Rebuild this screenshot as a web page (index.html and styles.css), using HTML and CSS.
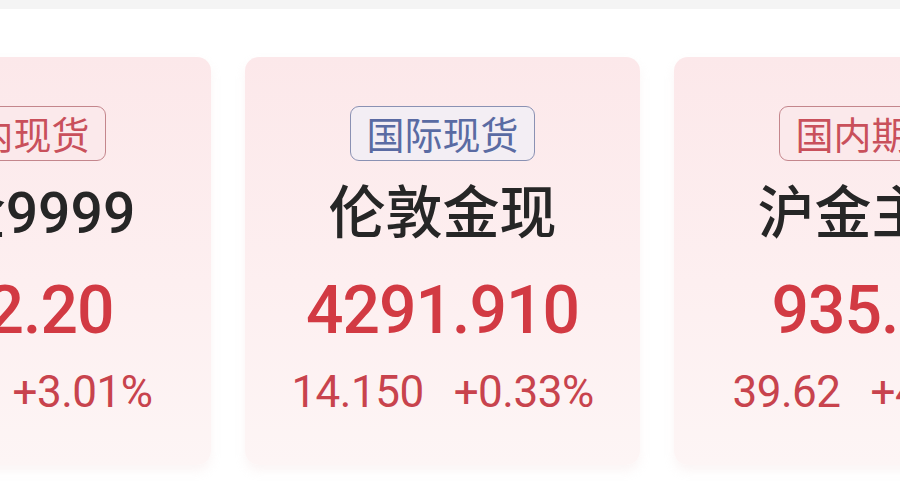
FILE: index.html
```html
<!DOCTYPE html>
<html lang="zh-CN">
<head>
<meta charset="utf-8">
<title>行情</title>
<link rel="stylesheet" href="styles.css">
</head>
<body>
<div class="topbar"></div>
<div class="cards">
  <div class="card">
    <div class="badge badge-red">国内现货</div>
    <div class="title">黄金9999</div>
    <div class="price">962.20</div>
    <div class="change"><span>28.12</span><span>+3.01%</span></div>
  </div>
  <div class="card">
    <div class="badge badge-blue">国际现货</div>
    <div class="title">伦敦金现</div>
    <div class="price">4291.910</div>
    <div class="change"><span>14.150</span><span>+0.33%</span></div>
  </div>
  <div class="card">
    <div class="badge badge-red">国内期货</div>
    <div class="title">沪金主连</div>
    <div class="price">935.66</div>
    <div class="change"><span>39.62</span><span>+4.42%</span></div>
  </div>
</div>
</body>
</html>
```
FILE: styles.css
```css
html, body {
  margin: 0;
  padding: 0;
  background: #ffffff;
  width: 900px;
  height: 500px;
  overflow: hidden;
  font-family: "Noto Sans CJK SC", "Noto Sans", sans-serif;
}
.topbar {
  height: 9px;
  background: #f4f4f4;
}
.cards {
  display: flex;
  gap: 34px;
  margin-top: 48px;
  margin-left: -184px;
}
.card {
  flex: 0 0 395px;
  height: 408px;
  box-sizing: border-box;
  padding-top: 49px;
  border-radius: 14px;
  background: linear-gradient(180deg, #fce8ea 0%, #fdeff0 55%, #fdf5f5 100%);
  box-shadow: 0 6px 10px rgba(240, 215, 215, 0.25);
  display: flex;
  flex-direction: column;
  align-items: center;
}
.badge {
  box-sizing: border-box;
  height: 55px;
  width: 185px;
  border-radius: 9px;
  border: 1.5px solid;
  font-size: 38px;
  line-height: 52px;
  text-align: center;
}
.badge-blue {
  border-color: #8a91b3;
  color: #5a6ba3;
  background: #f3eef4;
}
.badge-red {
  border-color: #c4868c;
  color: #c9505b;
  background: #fbe9eb;
}
.title {
  margin-top: 21px;
  font-family: Roboto, "Noto Sans CJK SC", sans-serif;
  font-size: 57px;
  line-height: 64px;
  font-weight: 500;
  color: #262626;
  white-space: nowrap;
}
.price {
  margin-top: 32px;
  font-family: Roboto, "Liberation Sans", sans-serif;
  font-size: 66px;
  line-height: 66px;
  letter-spacing: -1px;
  font-weight: 500;
  color: #d23a43;
  white-space: nowrap;
}
.change {
  margin-top: 23px;
  display: flex;
  gap: 30px;
  font-family: Roboto, "Liberation Sans", sans-serif;
  font-size: 44px;
  line-height: 50px;
  letter-spacing: -0.5px;
  color: #c8434d;
  white-space: nowrap;
}
```
